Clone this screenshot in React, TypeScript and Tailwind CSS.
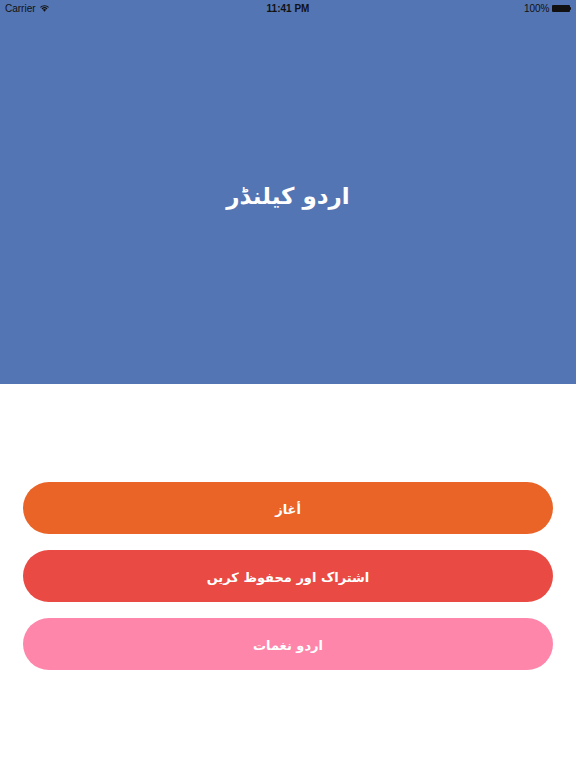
import React from "react";

const buttons = [
  { label: "أغاز", cls: "bg-[#ea6428]" },
  { label: "اشتراک اور محفوظ کریں", cls: "bg-[#e94a43]" },
  { label: "اردو نغمات", cls: "bg-[#ff86ab]" },
];

function Wifi() {
  return (
    <svg width="11" height="8" viewBox="0 0 12 9" className="ml-[3px]">
      <path d="M6 8.6 L4.2 6.6 A2.6 2.6 0 0 1 7.8 6.6 Z" fill="#111" />
      <path d="M2.7 5.1 A4.7 4.7 0 0 1 9.3 5.1 L8.4 6.1 A3.4 3.4 0 0 0 3.6 6.1 Z" fill="#111" />
      <path d="M1 3.3 A7.2 7.2 0 0 1 11 3.3 L10.1 4.3 A5.9 5.9 0 0 0 1.9 4.3 Z" fill="#111" />
    </svg>
  );
}

function Battery() {
  return (
    <div className="flex items-center ml-[2px]">
      <div className="w-[18px] h-[7px] bg-[#111] rounded-[1px]" />
      <div className="w-[1.5px] h-[3px] bg-[#111] rounded-r-sm" />
    </div>
  );
}

export default function App() {
  return (
    <div className="w-[576px] h-[768px] bg-white flex flex-col font-['DejaVu_Sans',sans-serif]">
      {/* Header */}
      <div className="h-[384px] bg-[#5375b3] flex flex-col">
        <div className="h-[16px] flex items-center justify-between px-[5px] text-[10px] text-[#111] font-['Liberation_Sans',sans-serif] relative">
          <div className="flex items-center">
            <span>Carrier</span>
            <Wifi />
          </div>
          <span className="absolute left-1/2 -translate-x-1/2 font-semibold">11:41 PM</span>
          <div className="flex items-center">
            <span>100%</span>
            <Battery />
          </div>
        </div>
        <div className="flex-1 flex items-center justify-center pb-[8px]">
          <h1 dir="rtl" className="text-white text-[23px] font-bold">
            اردو کیلنڈر
          </h1>
        </div>
      </div>

      {/* Buttons */}
      <div className="flex flex-col gap-[16px] px-[23px] pt-[98px]">
        {buttons.map((b) => (
          <button
            key={b.label}
            dir="rtl"
            className={`${b.cls} h-[52px] pt-[3px] rounded-full text-white text-[13px] font-bold flex items-center justify-center`}
          >
            {b.label}
          </button>
        ))}
      </div>
    </div>
  );
}
